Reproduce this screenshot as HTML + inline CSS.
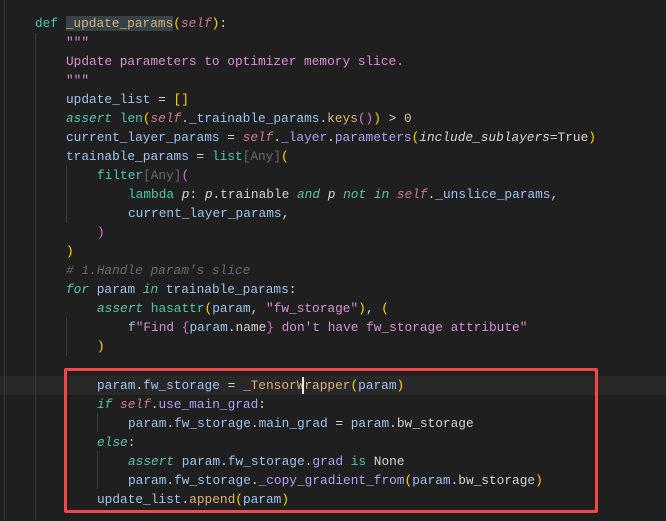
<!DOCTYPE html>
<html><head><meta charset="utf-8"><style>
body{margin:0;width:666px;height:521px;background:#1f1f1f;overflow:hidden;position:relative;font-family:"Liberation Mono",monospace;font-size:12.8px;}
.l{position:absolute;left:0;height:19px;line-height:19px;white-space:pre;color:#d4d4d4;}
.g{position:absolute;width:1px;background:#3a3a3a;}
.k{color:#4ec9b0}.ki{color:#5cc3ad;font-style:italic}
.v{color:#9cc4f0}.f{color:#dcb07a}.m{color:#b39ef0}.s{color:#d98fd2}
.se{color:#d07a8b;font-style:italic}.c{color:#6a6a6a;font-style:italic}
.y{color:#ffd700}.p{color:#da70d6}.a{color:#6a6a6a}.n{color:#d7c49b}.pi{color:#d4d4d4;font-style:italic}
.w{color:#d4d4d4}.b{color:#4ec9b0}
</style></head><body>
<div style="position:absolute;left:0;top:376px;width:666px;height:19px;background:#282828"></div>
<div class="g" style="left:4px;top:0;height:521px"></div>
<div class="g" style="left:35px;top:33px;height:488px"></div>
<div class="g" style="left:66px;top:166px;height:57px"></div>
<div class="g" style="left:66px;top:318px;height:38px"></div>
<div class="g" style="left:97px;top:413px;height:19px"></div>
<div class="g" style="left:97px;top:451px;height:38px"></div>
<div class="l" style="top:14px;left:35px"><span class="k">def</span> <span class="f" style="background:#354346">_update_params</span><span class="y">(</span><span class="se">self</span><span class="y">)</span>:</div>
<div class="l" style="top:33px;left:66px"><span class="s">"""</span></div>
<div class="l" style="top:52px;left:66px"><span class="s">Update parameters to optimizer memory slice.</span></div>
<div class="l" style="top:71px;left:66px"><span class="s">"""</span></div>
<div class="l" style="top:90px;left:66px"><span class="v">update_list</span> = <span class="y">[]</span></div>
<div class="l" style="top:109px;left:66px"><span class="ki">assert</span> <span class="b">len</span><span class="y">(</span><span class="se">self</span>.<span class="v">_trainable_params</span>.<span class="f">keys</span><span class="p">()</span><span class="y">)</span> &gt; <span class="n">0</span></div>
<div class="l" style="top:128px;left:66px"><span class="v">current_layer_params</span> = <span class="se">self</span>.<span class="m">_layer</span>.<span class="m">parameters</span><span class="y">(</span><span class="pi">include_sublayers</span>=True<span class="y">)</span></div>
<div class="l" style="top:147px;left:66px"><span class="v">trainable_params</span> = <span class="b">list</span><span class="a">[Any]</span><span class="y">(</span></div>
<div class="l" style="top:166px;left:97px"><span class="b">filter</span><span class="a">[Any]</span><span class="p">(</span></div>
<div class="l" style="top:185px;left:128px"><span class="k">lambda</span> <span class="pi">p</span>: <span class="pi">p</span>.trainable <span class="ki">and</span> <span class="pi">p</span> <span class="ki">not</span> <span class="ki">in</span> <span class="se">self</span>.<span class="v">_unslice_params</span>,</div>
<div class="l" style="top:204px;left:128px"><span class="v">current_layer_params</span>,</div>
<div class="l" style="top:223px;left:97px"><span class="p">)</span></div>
<div class="l" style="top:242px;left:66px"><span class="y">)</span></div>
<div class="l" style="top:261px;left:66px"><span class="c"># 1.Handle param's slice</span></div>
<div class="l" style="top:280px;left:66px"><span class="ki">for</span> <span class="v">param</span> <span class="ki">in</span> <span class="v">trainable_params</span>:</div>
<div class="l" style="top:299px;left:97px"><span class="ki">assert</span> <span class="b">hasattr</span><span class="y">(</span><span class="v">param</span>, <span class="s">"fw_storage"</span><span class="y">)</span>, <span class="y">(</span></div>
<div class="l" style="top:318px;left:128px"><span class="v">f</span><span class="s">"Find </span><span class="p">{</span><span class="v">param</span>.name<span class="p">}</span><span class="s"> don't have fw_storage attribute"</span></div>
<div class="l" style="top:337px;left:97px"><span class="y">)</span></div>
<div class="l" style="top:376px;left:97px"><span class="v">param</span>.<span class="v">fw_storage</span> = <span class="f">_TensorWrapper</span><span class="y">(</span><span class="v">param</span><span class="y">)</span></div>
<div style="position:absolute;left:302px;top:377px;width:2px;height:17px;background:#e6e6e6"></div>
<div class="l" style="top:395px;left:97px"><span class="ki">if</span> <span class="se">self</span>.<span class="m">use_main_grad</span>:</div>
<div class="l" style="top:414px;left:128px"><span class="v">param</span>.<span class="v">fw_storage</span>.<span class="v">main_grad</span> = <span class="v">param</span>.bw_storage</div>
<div class="l" style="top:433px;left:97px"><span class="ki">else</span>:</div>
<div class="l" style="top:452px;left:128px"><span class="ki">assert</span> <span class="v">param</span>.<span class="v">fw_storage</span>.<span class="m">grad</span> <span class="k">is</span> None</div>
<div class="l" style="top:471px;left:128px"><span class="v">param</span>.<span class="v">fw_storage</span>.<span class="m">_copy_gradient_from</span><span class="y">(</span><span class="v">param</span>.bw_storage<span class="y">)</span></div>
<div class="l" style="top:490px;left:97px"><span class="v">update_list</span>.<span class="f">append</span><span class="y">(</span><span class="v">param</span><span class="y">)</span></div>
<div style="position:absolute;left:64px;top:368px;width:528px;height:139px;border:3px solid #f04848;border-radius:2px"></div>
</body></html>
